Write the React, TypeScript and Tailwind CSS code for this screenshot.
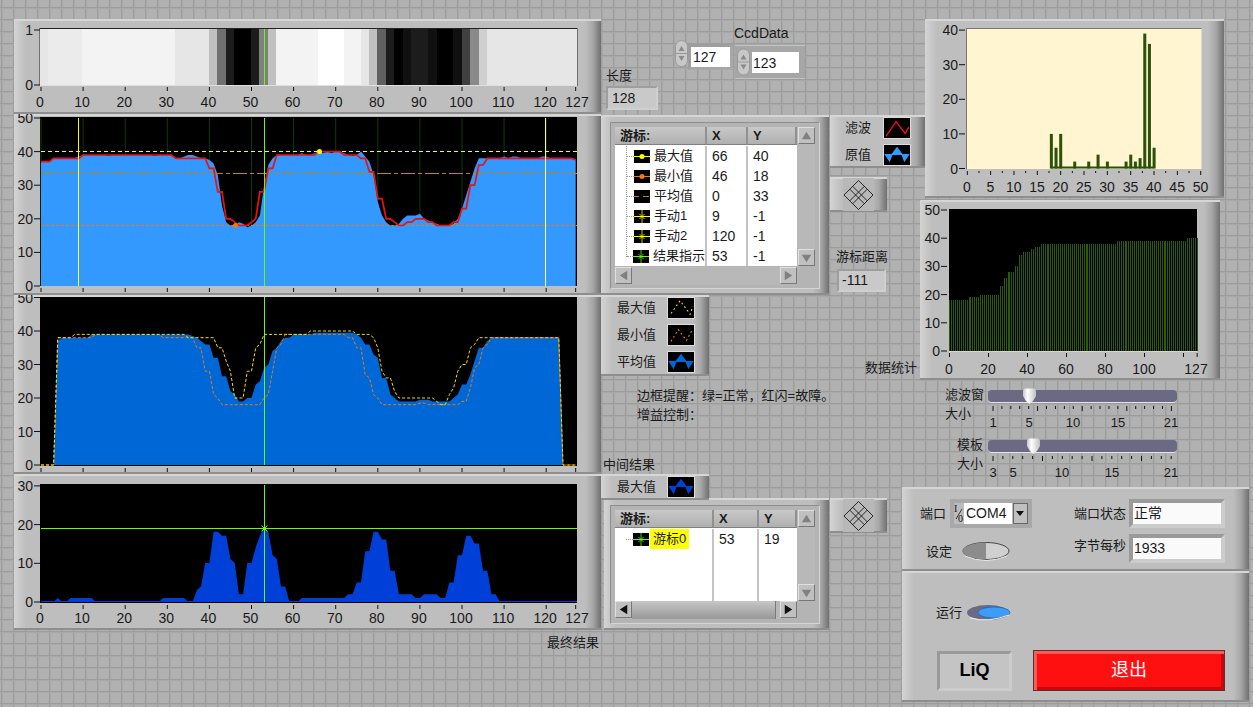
const rawData = [
  37, 37, 37, 38, 38, 38, 38, 38, 38, 38.5,
  39, 39, 39, 39, 39, 39, 38.7, 39, 39, 39,
  39, 39, 39, 39, 39, 39, 39, 38.7, 39, 39,
  39, 39, 38, 38, 38.5, 39, 39, 38.5, 38, 38,
  37.5, 36.5, 33, 24, 19, 18, 18, 19, 18.5, 17.5,
  18, 19, 21, 30, 36, 38, 39, 39, 39, 39,
  39, 39, 39.5, 39, 39, 39.5, 40, 39.5, 40, 39.5,
  40, 40, 39.5, 39, 38.7, 39, 40, 38.5, 37, 33,
  25, 21, 19, 18, 18, 18.5, 20, 21, 21, 21,
  21.5, 20, 19.5, 19, 18.5, 18, 18, 18, 18.5, 20,
  23, 27, 31, 35, 38, 38, 38, 38, 38, 38,
  38.5, 38, 38.5, 38.5, 38, 38, 38, 38, 38, 38.5,
  38.5, 38, 38, 38, 38, 38, 38, 37.5,
];

const filtered = [
  37, 37, 37, 38, 38, 38, 38, 38, 38, 38,
  39, 39, 39, 39, 39, 39, 39, 39, 39, 39,
  39, 39, 39, 39, 39, 39, 39, 39, 39, 39,
  39, 39, 38, 38, 38, 38, 38, 38, 38, 38,
  35, 35, 28, 28, 20, 20, 19, 18, 18, 18,
  19, 20, 28, 28, 35, 35, 39, 39, 39, 39,
  39, 39, 39, 39, 39, 39, 40, 40, 40, 40,
  40, 40, 39, 39, 39, 39, 38, 38, 34, 34,
  26, 26, 20, 20, 19, 18, 18, 19, 19, 20,
  20, 20, 19, 19, 18, 18, 18, 18, 19, 19,
  23, 23, 30, 30, 36, 36, 38, 38, 38, 38,
  38, 38, 38, 38, 38, 38, 38, 38, 38, 38,
  38, 38, 38, 38, 38, 38, 38, 37.5,
];

const average = [
  0, 0, 0, 0, 37, 38, 38, 38, 38, 38,
  38, 38, 39, 39, 39, 39, 39, 39, 39, 39,
  39, 39, 39, 39, 39, 39, 39, 39, 39, 39,
  39, 39, 39, 39, 39, 39, 38.5, 38, 37, 36,
  36, 32, 32, 26.5, 26.5, 22, 21, 19, 19, 20,
  20, 24, 25, 29, 30, 34, 35, 37, 38, 38,
  39, 39, 39, 39, 39, 39.5, 39.5, 39.5, 39.5, 39.5,
  39.5, 39.5, 39.5, 39.5, 39.5, 39, 38, 36, 36, 33,
  32, 26, 26, 21, 20, 19, 19, 19, 19, 19,
  19.5, 19.5, 19.5, 19, 19, 19, 19, 19, 20, 21,
  24, 24, 27, 31, 35, 35, 37, 38, 38, 38,
  38, 38, 38, 38, 38, 38, 38, 38, 38, 38,
  38, 38, 38, 38, 0, 0, 0, 0,
];

const maxLine = [
  0, 0, 0, 0, 38, 38, 38, 38, 39, 39,
  39, 39, 39, 39, 39, 39, 39, 39, 39, 39,
  39, 39, 39, 39, 39, 39, 39, 39, 39, 39,
  39, 39, 39, 39, 39, 38, 38, 38, 38, 38,
  38, 38, 35, 35, 31, 28, 20, 20, 20, 28,
  28, 35, 36, 39, 39, 39, 39, 39, 39, 39,
  39, 39, 39, 39, 40, 40, 40, 40, 40, 40,
  40, 40, 40, 40, 40, 39, 39, 39, 39, 38,
  35, 28, 26, 26, 22, 20, 20, 20, 20, 20,
  20, 20, 20, 20, 19, 18, 18, 21, 23, 28,
  30, 30, 35, 36, 38, 38, 38, 38, 38, 38,
  38, 38, 38, 38, 38, 38, 38, 38, 38, 38,
  38, 38, 38, 38, 0, 0, 0, 0,
];

const minLine = [
  0, 0, 0, 0, 38, 38, 38, 38, 38, 38,
  38, 38, 38, 39, 39, 39, 39, 39, 39, 39,
  39, 39, 39, 39, 39, 39, 39, 39, 39, 38,
  38, 38, 38, 38, 38, 38, 38, 35, 35, 28,
  28, 21, 20, 18, 18, 18, 18, 18, 18, 18,
  18, 18, 18, 20, 21, 28, 35, 36, 39, 39,
  39, 39, 39, 39, 39, 39, 39, 39, 39, 39,
  39, 39, 39, 38, 38, 35, 35, 27, 26, 21,
  20, 18, 18, 18, 18, 18, 18, 18, 18, 18,
  18.5, 18.5, 18, 18, 18, 18, 18, 18, 18, 18,
  19, 19, 23, 29, 30, 35, 36, 38, 38, 38,
  38, 38, 38, 38, 38, 38, 38, 38, 38, 38,
  38, 38, 38, 38, 0, 0, 0, 0,
];

const result = [
  0, 0, 0, 0, 1, 0, 0, 1, 1, 1,
  1, 1, 1, 0, 0, 0, 0, 0, 0, 0,
  0, 0, 0, 0, 0, 0, 0, 0, 0, 1,
  1, 1, 1, 1, 1, 0, 0, 3, 4, 10,
  10, 18, 18, 17, 17, 11, 10, 2, 2, 10,
  10, 14, 17, 19, 18, 12, 11, 4, 4, 0,
  0, 0, 1, 1, 1, 1, 1, 1, 1, 1,
  1, 1, 1, 2, 2, 5, 5, 13, 13, 18,
  18, 16, 16, 8, 8, 2, 2, 2, 2, 1,
  1, 2, 2, 2, 2, 1, 1, 5, 5, 12,
  12, 17, 17, 15, 15, 8, 8, 2, 2, 0,
  0, 0, 0, 0, 0, 0, 0, 0, 0, 0,
  0, 0, 0, 0, 0, 0, 0, 0,
];

const stripes: [number, number, string][] = [
  [40, 48, "#e6e6e6"], [48, 82, "#ebebeb"], [82, 175, "#f3f3f3"], [175, 209, "#e6e6e6"],
  [209, 217, "#c0c0c0"], [217, 226, "#707070"], [226, 234, "#1c1c1c"], [234, 251, "#000000"],
  [251, 259, "#1c1c1c"], [259, 268, "#808080"], [268, 276, "#c0c0c0"], [276, 318, "#f3f3f3"],
  [318, 344, "#ffffff"], [344, 361, "#f3f3f3"], [361, 369, "#e6e6e6"], [369, 377, "#c0c0c0"],
  [377, 386, "#606060"], [386, 394, "#1c1c1c"], [394, 403, "#000000"], [403, 411, "#101010"],
  [411, 428, "#1c1c1c"], [428, 437, "#101010"], [437, 453, "#000000"], [453, 462, "#101010"],
  [462, 470, "#404040"], [470, 479, "#8a8a8a"], [479, 487, "#d0d0d0"], [487, 577, "#e6e6e6"],
];

const histogram: [number, number][] = [
  [18, 10], [19, 6], [20, 10], [23, 2], [26, 2], [28, 4], [30, 2],
  [34, 2], [35, 4], [36, 2], [37, 3], [38, 39], [39, 36], [40, 6],
];

const sorted = histogram.flatMap(([value, count]) => Array<number>(count).fill(value));

const xTicks = [0, 10, 20, 30, 40, 50, 60, 70, 80, 90, 100, 110, 120, 127];
const px = (i: number) => 41 + 4.21 * i;

const points = (data: number[], zero: number, scale: number) =>
  data.map((v, i) => `${px(i).toFixed(1)},${(zero - v * scale).toFixed(1)}`).join(" ");

const area = (data: number[], zero: number, scale: number) =>
  `41,${zero} ${points(data, zero, scale)} ${px(127)},${zero}`;

const panelClass =
  "bg-[linear-gradient(90deg,#d4d4d4_0,#c6c6c6_7px,#bebebe_12px,#bebebe_calc(100%-16px),#a6a6a6_calc(100%-8px),#707070_100%)] shadow-[inset_0_2px_0_#d6d6d6,inset_0_-2px_0_#8e8e8e]";

const AxisX = ({ y, labels }: { y: number; labels?: number }) => (
  <g>
    {xTicks.map((t) => (
      <g key={t}>
        <line x1={px(t)} x2={px(t)} y1={y} y2={y + 4} stroke="#111" />
        {labels !== undefined && (
          <text x={t === 127 ? 577 : px(t) - 1} y={labels} textAnchor="middle">
            {t}
          </text>
        )}
      </g>
    ))}
  </g>
);

const AxisY = ({ values, zero, scale, right = 40 }: { values: number[]; zero: number; scale: number; right?: number }) => (
  <g>
    {values.map((v) => {
      const y = zero - v * scale;
      return (
        <g key={v}>
          <line x1={right - 6} x2={right} y1={y} y2={y} stroke="#111" />
          <text x={right - 7} y={y + 5} textAnchor="end">
            {v}
          </text>
        </g>
      );
    })}
  </g>
);

const IntensityPanel = () => (
  <div className={`${panelClass} h-[95px]`}>
    <svg viewBox="14 19 587 95" className="block w-full h-full">
      <rect x="39.5" y="28" width="538" height="58" fill="#222" />
      {stripes.map(([a, b, color]) => (
        <rect key={a} x={a} y="29" width={b - a} height="56" fill={color} />
      ))}
      <line x1="264.5" x2="264.5" y1="29" y2="85" stroke="#66ff00" />
      <line x1="39.5" x2="577" y1="85.5" y2="85.5" stroke="#e0e0e0" />
      <AxisY values={[0, 1]} zero={85} scale={55} />
      <AxisX y={87} labels={107} />
    </svg>
  </div>
);

const FilterPanel = () => (
  <div className={`${panelClass} h-[181px]`}>
    <svg viewBox="14 114 587 181" className="block w-full h-full">
      <rect x="40" y="117" width="537" height="169" fill="#000" />
      {xTicks.slice(0, -1).map((t) => (
        <line key={t} x1={px(t)} x2={px(t)} y1="118" y2="286" stroke="#0d3a0d" />
      ))}
      <polygon points={area(rawData, 286, 3.36)} fill="#3399ff" />
      <line x1="41" x2="577" y1="151.5" y2="151.5" stroke="#ffff00" strokeDasharray="4 3" />
      <line x1="41" x2="577" y1="173.5" y2="173.5" stroke="#b8860b" strokeDasharray="14 3 4 3" />
      <line x1="41" x2="577" y1="225.5" y2="225.5" stroke="#e87a10" strokeDasharray="3 2" />
      <polyline points={points(filtered, 286, 3.36)} fill="none" stroke="#f01010" strokeWidth="1.7" />
      <line x1="78.5" x2="78.5" y1="118" y2="286" stroke="#ffff00" />
      <line x1="545.5" x2="545.5" y1="118" y2="286" stroke="#ffff60" />
      <line x1="264.5" x2="264.5" y1="118" y2="286" stroke="#66ff00" />
      <circle cx="319.5" cy="151.5" r="2.5" fill="#ffff00" />
      <circle cx="235.5" cy="225.5" r="2.5" fill="#f07a10" />
      <AxisY values={[0, 10, 20, 30, 40, 50]} zero={286} scale={3.36} />
      <AxisX y={288} />
    </svg>
  </div>
);

const AveragePanel = () => (
  <div className={`${panelClass} h-[179px]`}>
    <svg viewBox="14 295 587 179" className="block w-full h-full">
      <rect x="40" y="297" width="537" height="169" fill="#000" />
      <polygon points={area(average, 465, 3.35)} fill="#0068d6" />
      <polyline points={points(minLine, 465, 3.35)} fill="none" stroke="#f07a10" strokeDasharray="3 2" />
      <polyline points={points(maxLine, 465, 3.35)} fill="none" stroke="#ffe000" strokeDasharray="3 2" />
      <line x1="264.5" x2="264.5" y1="297" y2="465" stroke="#66ff00" />
      <AxisY values={[0, 10, 20, 30, 40, 50]} zero={465} scale={3.35} />
      <AxisX y={468} />
    </svg>
  </div>
);

const ResultPanel = () => (
  <div className={`${panelClass} h-[156px]`}>
    <svg viewBox="14 474 587 156" className="block w-full h-full">
      <rect x="40" y="484" width="537" height="119" fill="#000" />
      <polygon points={area(result, 602, 3.9)} fill="#0040d8" />
      <line x1="41" x2="577" y1="601.5" y2="601.5" stroke="#0040d8" />
      <line x1="41" x2="577" y1="528.5" y2="528.5" stroke="#66ff00" />
      <line x1="264.5" x2="264.5" y1="485" y2="602" stroke="#66ff00" />
      <path d="M261.5 525.5l6 6M267.5 525.5l-6 6" stroke="#66ff00" />
      <AxisY values={[0, 10, 20, 30]} zero={602} scale={3.87} />
      <AxisX y={605} labels={623} />
    </svg>
  </div>
);

const HistogramPanel = () => (
  <div className={`${panelClass} ml-[5px] w-[299px] h-[179px]`}>
    <svg viewBox="925 19 299 179" className="block w-full h-full">
      <rect x="966.5" y="28" width="235" height="141" fill="#fff5d0" />
      <line x1="966.5" x2="1201.5" y1="28.5" y2="28.5" stroke="#777" />
      <line x1="966.5" x2="966.5" y1="28" y2="169" stroke="#777" />
      <line x1="1051" x2="1154" y1="167.5" y2="167.5" stroke="#2b5208" strokeWidth="2" />
      {histogram.map(([x, v]) => (
        <rect key={x} x={967.3 + x * 4.67 - 1.5} y={168.5 - v * 3.46} width="3" height={v * 3.46} fill="#2b5208" />
      ))}
      {Array.from({ length: 21 }, (_, i) => (
        <line key={i} x1={967.3 + i * 11.67} x2={967.3 + i * 11.67} y1="171" y2={i % 2 === 0 ? 175 : 173} stroke="#111" />
      ))}
      {[0, 5, 10, 15, 20, 25, 30, 35, 40, 45, 50].map((t) => (
        <text key={t} x={967 + t * 4.67} y="192" textAnchor="middle">
          {t}
        </text>
      ))}
      <AxisY values={[0, 10, 20, 30, 40]} zero={168.5} scale={3.46} right={965} />
    </svg>
  </div>
);

const SortedPanel = () => (
  <div className={`${panelClass} mt-[2px] w-[300px] h-[180px]`}>
    <svg viewBox="920 200 300 180" className="block w-full h-full">
      <rect x="949" y="209" width="248" height="142" fill="#000" />
      {sorted.map((v, i) => (
        <rect key={i} x={Math.round(949 + i * 1.95)} y={351 - v * 2.82} width="1" height={v * 2.82} fill="#2c5a08" shapeRendering="crispEdges" />
      ))}
      <line x1="949" x2="1197" y1="351.5" y2="351.5" stroke="#d8d8d8" />
      <AxisY values={[0, 10, 20, 30, 40, 50]} zero={351} scale={2.82} right={947} />
      {[0, 20, 40, 60, 80, 100, 120, 127].map((t) => (
        <g key={t}>
          <line x1={949.5 + t * 1.95} x2={949.5 + t * 1.95} y1="353" y2="357" stroke="#111" />
          {t !== 120 && (
            <text x={t === 127 ? 1196 : 949 + t * 1.95} y="374" textAnchor="middle">
              {t}
            </text>
          )}
        </g>
      ))}
    </svg>
  </div>
);

const Swatch = ({ kind }: { kind: string }) => (
  <svg viewBox="0 0 28 22" className="w-[28px] h-[22px] bg-black border border-[#dcdcdc] box-border shrink-0">
    {kind === "red" && <path d="M2 20L13 4L23 17L27 10" fill="none" stroke="#f01010" strokeWidth="1.5" />}
    {kind === "raw" && <path d="M0 10H8L14 2L20 10H28L22 19L19 11H9L6 19Z" fill="#3399ff" />}
    {kind === "avg" && <path d="M0 10H8L14 2L20 10H28L22 19L19 11H9L6 19Z" fill="#0068d6" />}
    {kind === "dark" && <path d="M0 10H8L14 2L20 10H28L22 19L19 11H9L6 19Z" fill="#0040d8" />}
    {kind === "max" && <path d="M3 17L13 3L22 15L24 18L27 9" fill="none" stroke="#ffe000" strokeWidth="1.2" strokeDasharray="2 3" />}
    {kind === "min" && <path d="M3 18L11 5L20 17L26 6" fill="none" stroke="#f07a10" strokeWidth="1.2" strokeDasharray="2 3" />}
  </svg>
);

const LegendRow = ({ label, kind }: { label: string; kind: string }) => (
  <div className="flex items-center justify-between">
    <span>{label}</span>
    <Swatch kind={kind} />
  </div>
);

const Diamond = () => (
  <div className={`${panelClass} w-[57px] h-[35px] shrink-0 flex items-center justify-center`}>
    <div className="w-[31px] h-[33px] bg-[#b8b8b8] flex items-center justify-center">
      <svg viewBox="0 0 32 32" className="w-[32px] h-[32px]">
        <path d="M16 1L31 16L16 31L1 16Z M7 10L22 25 M10 7L25 22 M22 7L7 22 M25 10L10 25" fill="none" stroke="#111" strokeWidth="0.9" />
      </svg>
    </div>
  </div>
);

const TreeIcon = ({ color, kind }: { color: string; kind: string }) => (
  <svg viewBox="0 0 16 13" className="w-[16px] h-[13px] bg-black shrink-0">
    {kind === "dash" ? (
      <path d="M0 6.5h5M9 6.5h6" stroke={color} />
    ) : (
      <path d="M0 6.5h16" stroke={color} />
    )}
    {kind === "dot" && <circle cx="8" cy="6.5" r="2.5" fill={color} />}
    {kind === "cross" && <path d="M8 0v13M5.5 4l5 5M10.5 4l-5 5" stroke={color} fill="none" strokeWidth="0.8" />}
  </svg>
);

const Arrow = ({ dir, active = false }: { dir: string; active?: boolean }) => {
  const d = { up: "M8 4L13 12H3Z", down: "M8 13L3 5H13Z", left: "M4 8L12 3V13Z", right: "M12 8L4 3V13Z" }[dir];
  return (
    <div className="w-[17px] h-[17px] bg-[#c0c0c0] border border-t-[#e0e0e0] border-l-[#e0e0e0] border-r-[#777] border-b-[#777] box-border shrink-0">
      <svg viewBox="0 0 16 16" className="w-full h-full">
        <path d={d} fill={active ? "#111" : "#808080"} />
      </svg>
    </div>
  );
};

const HeadCell = ({ label, className }: { label: string; className: string }) => (
  <div className={`${className} h-[18px] shrink-0 pl-[5px] font-bold text-[13px] leading-[18px] bg-[linear-gradient(180deg,#c8c8c8,#b0b0b0)] border-r-2 border-b border-r-[#909090] border-b-[#808080]`}>
    {label}
  </div>
);

const cursorRows: [string, string, string, string, string][] = [
  ["最大值", "66", "40", "#ffff00", "dot"],
  ["最小值", "46", "18", "#f07a10", "dot"],
  ["平均值", "0", "33", "#b8860b", "dash"],
  ["手动1", "9", "-1", "#ffff00", "cross"],
  ["手动2", "120", "-1", "#ffff00", "cross"],
  ["结果指示", "53", "-1", "#66ff00", "cross"],
];

const CursorTable = () => (
  <div className={`${panelClass} w-[228px] h-[180px] shrink-0 pl-[9px] pt-[7px]`}>
    <div className="w-[210px] h-[167px] p-[4px] bg-[#b4b4b4] border border-t-[#8e8e8e] border-l-[#8e8e8e] border-r-[#d4d4d4] border-b-[#d4d4d4]">
      <div className="flex">
        <div className="w-[182px]">
          <div className="flex">
            <HeadCell label="游标:" className="w-[92px]" />
            <HeadCell label="X" className="w-[41px]" />
            <HeadCell label="Y" className="w-[49px]" />
          </div>
          <div className="bg-white h-[121px] flex pt-[1px]">
            <div className="w-[92px] border-r-2 border-[#c4c4c4] pl-[11px]">
              <div className="border-l border-dotted border-[#999] h-[111px]">
                {cursorRows.map(([name, , , color, kind]) => (
                  <div key={name} className="h-[20px] flex items-center whitespace-nowrap">
                    <span className="w-[7px] border-t border-dotted border-[#999]" />
                    <TreeIcon color={color} kind={kind} />
                    <span className="ml-[4px]">{name}</span>
                  </div>
                ))}
              </div>
            </div>
            <div className="w-[41px] border-r-2 border-[#c4c4c4] pl-[5px]">
              {cursorRows.map((r) => (
                <div key={r[0]} className="h-[20px] leading-[20px] text-[14px]">{r[1]}</div>
              ))}
            </div>
            <div className="pl-[5px]">
              {cursorRows.map((r) => (
                <div key={r[0]} className="h-[20px] leading-[20px] text-[14px]">{r[2]}</div>
              ))}
            </div>
          </div>
        </div>
        <div className="flex-1 flex flex-col justify-between items-center bg-[#b8b8b8]">
          <Arrow dir="up" />
          <Arrow dir="down" />
        </div>
      </div>
      <div className="flex justify-between w-[182px] h-[18px] mt-[1px] bg-[#b8b8b8]">
        <Arrow dir="left" />
        <Arrow dir="right" />
      </div>
    </div>
  </div>
);

const FinalTable = () => (
  <div className={`${panelClass} w-[225px] h-[132px] shrink-0 pl-[6px] pt-[7px]`}>
    <div className="w-[210px] h-[119px] p-[4px] bg-[#b4b4b4] border border-t-[#8e8e8e] border-l-[#8e8e8e] border-r-[#d4d4d4] border-b-[#d4d4d4]">
      <div className="flex">
        <div className="w-[182px]">
          <div className="flex">
            <HeadCell label="游标:" className="w-[99px]" />
            <HeadCell label="X" className="w-[45px]" />
            <HeadCell label="Y" className="w-[38px]" />
          </div>
          <div className="bg-white h-[73px] flex pt-[1px]">
            <div className="w-[99px] border-r-2 border-[#c4c4c4] pl-[11px]">
              <div className="h-[20px] flex items-center whitespace-nowrap">
                <span className="w-[7px] border-t border-dotted border-[#999]" />
                <TreeIcon color="#66ff00" kind="cross" />
                <span className="ml-[1px] px-[3px] bg-[#ffff00]">游标0</span>
              </div>
            </div>
            <div className="w-[45px] border-r-2 border-[#c4c4c4] pl-[5px] leading-[20px] text-[14px]">53</div>
            <div className="pl-[5px] leading-[20px] text-[14px]">19</div>
          </div>
        </div>
        <div className="flex-1 flex flex-col justify-between items-center bg-[#b8b8b8]">
          <Arrow dir="up" />
          <Arrow dir="down" />
        </div>
      </div>
      <div className="flex w-[182px] h-[18px] bg-[#b8b8b8]">
        <Arrow dir="left" active />
        <div className="flex-1 bg-[linear-gradient(180deg,#c6c6c6,#989898)] border-r border-[#777] mr-[4px]" />
        <Arrow dir="right" active />
      </div>
    </div>
  </div>
);

const Spinner = ({ className }: { className: string }) => (
  <svg viewBox="0 0 13 27" className={className}>
    <rect x="0.5" y="0.5" width="12" height="26" rx="6" fill="#c8c8c8" stroke="#9a9a9a" />
    <line x1="1" x2="12" y1="13.5" y2="13.5" stroke="#999" />
    <path d="M6.5 6L9.5 11H3.5Z" fill="#8a8a8a" />
    <path d="M6.5 21L3.5 16H9.5Z" fill="#8a8a8a" />
  </svg>
);

const TopControls = () => (
  <div className="flex items-start h-[96px]">
    <div className="w-[74px] pl-[5px] pt-[47px]">
      <div className="h-[20px] leading-[20px]">长度</div>
      <div className="w-[52px] h-[24px] pl-[4px] text-[14px] leading-[20px] bg-[#c9c9c9] border-2 border-t-[#9e9e9e] border-l-[#9e9e9e] border-r-[#cfcfcf] border-b-[#cfcfcf]">
        128
      </div>
    </div>
    <div className="flex items-start mt-[21px]">
      <Spinner className="w-[13px] h-[27px]" />
      <div className="mt-[4px] w-[45px] h-[26px] border-[3px] border-t-[#9e9e9e] border-l-[#9e9e9e] border-r-[#a8a8a8] border-b-[#a8a8a8] bg-white pl-[2px] text-[14px] leading-[20px]">
        127
      </div>
    </div>
    <div className="ml-[2px] mt-[6px] w-[70px]">
      <div className="h-[20px] leading-[16px] text-[14px] -ml-[1px]">CcdData</div>
      <div className="flex items-center h-[34px] bg-[#a6a6a6] pl-[2px] pr-[6px] border-t border-b border-[#c4c4c4]">
        <Spinner className="w-[13px] h-[30px]" />
        <div className="ml-[2px] flex-1 h-[21px] bg-white pl-[1px] text-[14px] leading-[22px]">123</div>
      </div>
    </div>
  </div>
);

const MiddleColumn = () => (
  <div className="w-[319px] shrink-0">
    <TopControls />
    <div className="flex h-[180px]">
      <CursorTable />
      <div className="ml-[1px] shrink-0">
        <div className={`${panelClass} w-[95px] h-[53px] pl-[15px] pr-[14px] pt-[2px] flex flex-col gap-[5px]`}>
          <LegendRow label="滤波" kind="red" />
          <LegendRow label="原值" kind="raw" />
        </div>
        <div className="mt-[9px]">
          <Diamond />
        </div>
        <div className="mt-[36px] ml-[6px] leading-[18px]">游标距离</div>
        <div className="ml-[7px] mt-[3px] w-[49px] h-[23px] pl-[3px] text-[14px] leading-[19px] bg-[#c9c9c9] border-2 border-t-[#9e9e9e] border-l-[#9e9e9e] border-r-[#cfcfcf] border-b-[#cfcfcf]">
          -111
        </div>
      </div>
    </div>
    <div className="flex justify-between items-end h-[81px] pr-[3px]">
      <div className={`${panelClass} w-[108px] h-[81px] pl-[16px] pr-[14px] pt-[2px] flex flex-col gap-[5px]`}>
        <LegendRow label="最大值" kind="max" />
        <LegendRow label="最小值" kind="min" />
        <LegendRow label="平均值" kind="avg" />
      </div>
      <span className="leading-[16px]">数据统计</span>
    </div>
    <div className="mt-[10px] pl-[36px] leading-[19px]">
      <div>边框提醒：绿=正常，红闪=故障。</div>
      <div>增益控制：</div>
    </div>
    <div className="mt-[32px] pl-[2px] leading-[18px]">中间结果</div>
    <div className={`${panelClass} relative z-10 w-[108px] h-[26px] pl-[16px] pr-[14px] pt-[2px]`}>
      <LegendRow label="最大值" kind="dark" />
    </div>
    <div className="flex -mt-[2px]">
      <div className="ml-[3px] shrink-0">
        <FinalTable />
      </div>
      <div className="ml-[1px] shrink-0">
        <Diamond />
      </div>
    </div>
  </div>
);

const Thumb = ({ className }: { className: string }) => (
  <svg viewBox="0 0 13 16" className={className}>
    <defs>
      <linearGradient id="thumb" x1="0" x2="1" y1="0" y2="0">
        <stop offset="0" stopColor="#c8c8c8" />
        <stop offset="0.35" stopColor="#ffffff" />
        <stop offset="1" stopColor="#c0c0c0" />
      </linearGradient>
    </defs>
    <path d="M2 0.5H11Q13 0.5 13 3V8Q11 13 6.5 16Q2 13 0 8V3Q0 0.5 2 0.5Z" fill="url(#thumb)" />
  </svg>
);

const SliderScale = ({ ticks, marks }: { ticks: number[]; marks: [number, string][] }) => (
  <svg viewBox="988 0 190 26" className="block w-[190px] h-[26px]">
    {ticks.map((x, i) => (
      <line key={i} x1={x} x2={x} y1="3" y2={i % 5 === 0 ? 8 : 6} stroke="#111" />
    ))}
    {marks.map(([x, label]) => (
      <text key={label} x={x} y="24" textAnchor="middle">
        {label}
      </text>
    ))}
  </svg>
);

const Slider = ({ name, labelPad, thumb, ticks, marks }: { name: string; labelPad: string; thumb: string; ticks: number[]; marks: [number, string][] }) => (
  <div className="flex">
    <div className="w-[68px] leading-[19px] -mt-[5px]">
      <div className={labelPad}>{name}</div>
      <div className={labelPad}>大小</div>
    </div>
    <div>
      <div className="relative h-[13px] w-[189px] rounded-[4px] bg-[#6a6a84] border-b border-[#e4e4e4]">
        <Thumb className={`${thumb} absolute -top-[2px] w-[13px] h-[16px]`} />
      </div>
      <SliderScale ticks={ticks} marks={marks} />
    </div>
  </div>
);

const Toggle = ({ on }: { on: boolean }) =>
  on ? (
    <svg viewBox="0 0 45 17" className="w-[45px] h-[17px]">
      <ellipse cx="22" cy="8.5" rx="21" ry="7.5" fill="#6a6a84" />
      <ellipse cx="28" cy="8.5" rx="16" ry="5.5" fill="#3d9cf5" stroke="#1a5cb0" strokeWidth="0.6" />
      <path d="M4 14Q22 19 43 11" fill="none" stroke="#f0f0f0" />
    </svg>
  ) : (
    <svg viewBox="0 0 50 21" className="w-[50px] h-[21px]">
      <ellipse cx="25" cy="10" rx="23" ry="8.5" fill="#d0d0d0" stroke="#444" />
      <path d="M25 1.5A23 8.5 0 0 0 25 18.5Z" fill="#8c8c8c" />
      <path d="M4 15Q25 24 46 15" fill="none" stroke="#e8e8e8" />
    </svg>
  );

const StatusBox = ({ value }: { value: string }) => (
  <div className="w-[96px] h-[29px] border-[4px] border-t-[#9a9a9a] border-l-[#9a9a9a] border-r-[#cccccc] border-b-[#cccccc] bg-[#fafafa] pl-[1px] text-[14px] leading-[21px]">
    {value}
  </div>
);

const StatusPanel = () => (
  <div className="-ml-[18px] mt-[8px] w-[347px] h-[215px]">
    <div className={`${panelClass} h-[84px] flex pl-[18px] pt-[12px]`}>
      <div className="w-[132px]">
        <div className="flex items-center h-[29px]">
          <span className="w-[30px]">端口</span>
          <div className="flex items-center w-[82px] h-[29px] border-[4px] border-[#a8a8a8] bg-[#bcbcbc]">
            <svg viewBox="0 0 10 21" className="w-[10px] h-[21px] shrink-0 fill-[#111] font-['Liberation_Serif',serif] text-[10px]">
              <text x="0" y="9">I</text>
              <text x="4" y="19">0</text>
              <line x1="8" x2="2" y1="6" y2="16" stroke="#111" strokeWidth="0.8" />
            </svg>
            <span className="w-[50px] h-full bg-white pl-[2px] text-[14px] leading-[21px]">COM4</span>
            <div className="w-[16px] h-full ml-[1px] bg-[#c0c0c0] border border-[#666] flex items-center justify-center">
              <svg viewBox="0 0 8 5" className="w-[8px] h-[5px]">
                <path d="M0 0H8L4 5Z" fill="#111" />
              </svg>
            </div>
          </div>
        </div>
        <div className="flex items-center mt-[13px] pl-[6px]">
          <span className="w-[35px]">设定</span>
          <Toggle on={false} />
        </div>
      </div>
      <div className="ml-[22px] flex flex-col gap-[6px]">
        <div className="flex items-center">
          <span className="w-[55px]">端口状态</span>
          <StatusBox value="正常" />
        </div>
        <div className="flex items-center">
          <span className="w-[55px] -mt-[6px]">字节每秒</span>
          <StatusBox value="1933" />
        </div>
      </div>
    </div>
    <div className={`${panelClass} h-[131px] pl-[34px] pt-[33px]`}>
      <div className="flex items-center h-[17px]">
        <span className="w-[30px]">运行</span>
        <Toggle on />
      </div>
      <div className="flex items-center mt-[29px] pl-[1px]">
        <div className="w-[75px] h-[40px] flex items-center justify-center font-bold text-[18px] text-black bg-[#c4c4c4] border-[3px] border-t-[#9a9a9a] border-l-[#9a9a9a] border-r-[#cccccc] border-b-[#cccccc]">
          LiQ
        </div>
        <div className="ml-[21px] w-[192px] h-[41px] flex items-center justify-center text-[18px] text-white bg-[#ff1010] border border-[#5a3030] shadow-[inset_3px_3px_0_#ff5a5a,inset_-3px_-3px_0_#c80808]">
          退出
        </div>
      </div>
    </div>
  </div>
);

const slider1Ticks = Array.from({ length: 21 }, (_, i) => 993 + i * 8.92);
const slider2Ticks = Array.from({ length: 19 }, (_, i) => 993 + i * 9.9);

export default function App() {
  return (
    <div className="flex items-start w-[1253px] h-[707px] overflow-hidden pl-[14px] pt-[19px] bg-[#b1b1b1] bg-[linear-gradient(#9c9c9c_1px,#a9a9a9_1px,#a9a9a9_2px,transparent_2px),linear-gradient(90deg,#9c9c9c_1px,#a9a9a9_1px,#a9a9a9_2px,transparent_2px)] bg-[length:12px_12px] bg-[position:1px_7px] font-['Liberation_Sans','Noto_Sans_CJK_SC',sans-serif] text-[13px] text-[#1a1a1a]">
      <div className="w-[587px] shrink-0 text-[14px] fill-[#1a1a1a]">
        <IntensityPanel />
        <FilterPanel />
        <AveragePanel />
        <ResultPanel />
        <div className="mt-[5px] pr-[2px] text-right text-[13px] leading-[16px]">最终结果</div>
      </div>
      <MiddleColumn />
      <div className="w-[333px] shrink-0 text-[14px] fill-[#1a1a1a]">
        <HistogramPanel />
        <SortedPanel />
        <div className="mt-[10px] text-[13px]">
          <Slider
            name="滤波窗"
            labelPad="pl-[25px]"
            thumb="left-[35px]"
            ticks={slider1Ticks}
            marks={[[993, "1"], [1029, "5"], [1073, "10"], [1118, "15"], [1171, "21"]]}
          />
        </div>
        <div className="mt-[11px] text-[13px]">
          <Slider
            name="模板"
            labelPad="pl-[37px]"
            thumb="left-[39px]"
            ticks={slider2Ticks}
            marks={[[993, "3"], [1013, "5"], [1062, "10"], [1112, "15"], [1171, "21"]]}
          />
        </div>
        <div className="text-[13px]">
          <StatusPanel />
        </div>
      </div>
    </div>
  );
}
